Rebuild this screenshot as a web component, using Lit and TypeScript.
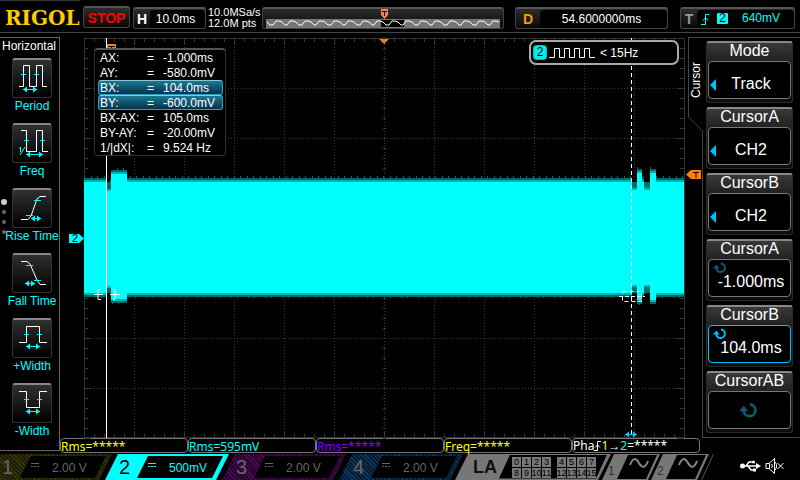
import { LitElement, html, svg, css, nothing } from "lit";
import { customElement, property } from "lit/decorators.js";
import { classMap } from "lit/directives/class-map.js";

const arrow = (x1: number, x2: number, y: number) => svg`
  <path class="c" d="M${x1} ${y}H${x2}"/>
  <path class="cf" d="M${x1} ${y}l4 -3v6zM${x2} ${y}l-4 -3v6z"/>`;

const measureIcons = [
  { label: "Period", art: svg`<path class="w" d="M7 28.5H11.5V7.5H17.5V28.5H24.5V7.5H30.5V28.5H35"/><path class="c" d="M9 16.5h5M22 16.5h5"/>${arrow(11, 25, 31.5)}` },
  { label: "Freq", art: svg`<path class="w" d="M9 7.5H14.5V28.5H24.5V7.5H30.5V28.5H36"/><path class="c" d="M12 17.5h5M28 17.5h5M7 25.5l1.5 -1.5v5M8 32L13 24"/>${arrow(14, 31, 31.5)}` },
  { label: "Rise Time", art: svg`<path class="w" d="M9 31.5H16L19 28L25 11L28 8.5H34"/><path class="c" d="M22 12.5h7M14 27.5h7"/>${arrow(19, 29, 30.5)}` },
  { label: "Fall Time", art: svg`<path class="w" d="M9 8.5H15L18 11L25 27L28 31.5H34"/><path class="c" d="M14 12.5h7M22 27.5h7"/>${arrow(13, 23, 30.5)}` },
  { label: "+Width", art: svg`<path class="w" d="M7 24.5H14.5V8.5H27.5V24.5H35"/><path class="c" d="M12 16.5h5M25 16.5h5"/>${arrow(14, 28, 28.5)}` },
  { label: "-Width", art: svg`<path class="w" d="M7 8.5H14.5V24.5H27.5V8.5H35"/><path class="c" d="M12 16.5h5M25 16.5h5"/>${arrow(14, 28, 28.5)}` },
];

const reset = css`
  *, *::before, *::after { box-sizing: border-box; }
  button { font: inherit; color: inherit; background: none; border: 0; padding: 0; margin: 0; cursor: pointer; }
  svg { display: block; }
`;

@customElement("scope-header")
export class ScopeHeader extends LitElement {
  static styles = [reset, css`
    :host { display: flex; height: 33px; border-bottom: 1px solid #444; padding: 0 5px 0 0; align-items: flex-start; font-size: 12px; }
    .logo { width: 80px; height: 32px; margin: 0 3px 0 0; padding-left: 5px; border-top: 1px solid #333; font: bold 20px/34px "DejaVu Serif", serif; color: #fc0; }
    .chip { height: 22px; margin-top: 7px; border: 1px solid #444; border-top: 2px solid #555; border-radius: 3px; background: linear-gradient(#2c2c2c, #080808); display: flex; align-items: center; color: #fff; }
    .stop { width: 47px; margin-top: 6px; justify-content: center; color: #f00; font: bold 14px/18px "Liberation Sans", sans-serif; }
    .time { width: 73px; margin-left: 3px; }
    .key { width: 16px; text-align: center; font: bold 14px/18px "Liberation Sans", sans-serif; }
    .val { flex: 1; height: 18px; line-height: 19px; padding-right: 4px; background: #000; border-radius: 4px; text-align: center; }
    .rate { width: 52px; margin: 7px 2px 0; font-size: 11px; line-height: 11px; white-space: nowrap; color: #fff; }
    .mem { flex: 1; padding: 0 3px; }
    .mem svg { width: 100%; height: 20px; }
    .delay { width: 153px; margin-left: 11px; }
    .delay .key { width: 24px; color: #f90; }
    .trig { width: 115px; margin-left: 12px; color: #0ff; }
    .trig .key { color: #999; }
    .trig .val { display: flex; align-items: center; padding-left: 4px; }
    .src { width: 11px; height: 11px; margin: 0 14px 0 8px; border-radius: 1px; background: #0ff; color: #000; line-height: 11px; text-align: center; }
  `];
  render() {
    let wave = "M1 13";
    for (let i = 0; i < 8; i++) wave += "l3 3h3l3 -4h3l3 1l3 3h2l3 -4h3l3 1";
    return html`
      <div class="logo">RIGOL</div>
      <button class="chip stop">STOP</button>
      <button class="chip time"><span class="key">H</span><span class="val">10.0ms</span></button>
      <div class="rate">10.0MSa/s<br>12.0M pts</div>
      <div class="chip mem">
        <svg viewBox="0 0 234 20" preserveAspectRatio="none">
          <rect x="0" y="10" width="234" height="9" fill="#777"/>
          <rect x="115" y="11" width="23" height="7" fill="#000"/>
          <path d=${wave} fill="none" stroke="#fff"/>
          <path d="M115 0h7v6l-3.5 4l-3.5 -4z" fill="#ff7f3f"/>
          <path d="M116 2.5h5M118.5 2v5" stroke="#000" fill="none"/>
        </svg>
      </div>
      <button class="chip delay"><span class="key">D</span><span class="val">54.6000000ms</span></button>
      <button class="chip trig"><span class="key">T</span><span class="val">
        <svg width="8" height="12" viewBox="0 0 8 12"><path d="M0 11.5H4.5V1.5H8M2 7.5L4.5 4.5L7 7.5" fill="none" stroke="#0ff"/></svg>
        <span class="src">2</span>640mV</span></button>`;
  }
}

@customElement("measure-menu")
export class MeasureMenu extends LitElement {
  static styles = [reset, css`
    :host { display: flex; flex-direction: column; position: relative; margin: 4px 0 2px; border: solid #666; border-width: 1px 1px 1px 0; font-size: 12px; }
    .title { padding-left: 2px; height: 20px; line-height: 16px; color: #fff; }
    .list { display: grid; gap: 9px; justify-items: center; padding-left: 4px; }
    button { display: grid; justify-items: center; color: #0ff; white-space: nowrap; width: 56px; }
    .box { width: 40px; height: 40px; border: 1px solid #333; border-top: 2px solid #888; border-radius: 3px; background: linear-gradient(#303030, #000); }
    .box svg { margin: -2px 0 0 -1px; }
    .label { height: 16px; line-height: 16px; }
    .w, .c { fill: none; stroke: #fff; }
    .c { stroke: #0ff; }
    .cf { fill: #0ff; }
    .pages { position: absolute; left: 0; top: 160px; }
  `];
  render() {
    return html`
      <div class="title">Horizontal</div>
      <div class="list">${measureIcons.map((m) => html`
        <button><span class="box"><svg width="40" height="40" viewBox="0 0 40 40">${m.art}</svg></span><span class="label">${m.label}</span></button>`)}
      </div>
      <svg class="pages" width="8" height="40" viewBox="0 0 8 40">
        <circle cx="4" cy="4" r="3" fill="#ccc"/>
        <circle cx="4" cy="14" r="2" fill="#666"/><circle cx="4" cy="24" r="2" fill="#666"/><circle cx="4" cy="34" r="2" fill="#666"/>
      </svg>`;
  }
}

const readings: [string, string, boolean][] = [
  ["AX:", "-1.000ms", false],
  ["AY:", "-580.0mV", false],
  ["BX:", "104.0ms", true],
  ["BY:", "-600.0mV", true],
  ["BX-AX:", "105.0ms", false],
  ["BY-AY:", "-20.00mV", false],
  ["1/|dX|:", "9.524 Hz", false],
];

/* Envelope of the trace, as [from, to, top, bottom] spans of the 600 x 400 graticule. */
const spans = [
  [0, 23, 144, 255], [23, 27, 153, 248], [27, 43, 136, 261], [43, 548, 144, 255],
  [548, 553, 152, 247], [553, 558, 135, 262], [558, 560, 144, 255], [560, 566, 152, 247],
  [566, 572, 135, 262], [572, 600, 144, 255],
];

@customElement("scope-plot")
export class ScopePlot extends LitElement {
  static styles = [reset, css`
    :host { display: block; position: relative; z-index: 1; padding: 5px 4px 0 24px; }
    .plot { width: 100%; height: 100%; overflow: visible; }
    .mark { font: 11px "Liberation Sans", sans-serif; }
    .readout { position: absolute; left: 34px; top: 15px; width: 132px; padding: 0 2px 0 3px; background: #000; border: 1px solid #333; border-top: 2px solid #555; border-radius: 4px; font-size: 12px; color: #fff; }
    table { width: 100%; border-collapse: separate; border-spacing: 0; table-layout: fixed; }
    th, td { height: 15px; line-height: 14px; padding: 0; font-weight: normal; text-align: left; white-space: nowrap; }
    th { width: 49px; padding-left: 2px; }
    .eq { width: 16px; }
    .on th, .on td { background: linear-gradient(#1c7a94, #04304a); border: solid #2aa0bc; border-width: 1px 0; border-top-color: #8cc8d8; line-height: 12px; }
    .on th { border-left-width: 1px; padding-left: 1px; border-radius: 3px 0 0 3px; }
    .on td:last-child { border-right-width: 1px; border-radius: 0 3px 3px 0; }
    .freq { position: absolute; right: 9px; top: 7px; width: 150px; height: 25px; display: flex; align-items: center; gap: 2px; padding-left: 2px; background: #000; border: 2px solid #aaa; border-radius: 7px; font-size: 12px; color: #fff; }
    .ch { width: 14px; height: 15px; border-radius: 4px; background: #0ee; color: #000; text-align: center; line-height: 15px; box-shadow: inset 0 0 2px #055; }
    .freq .num { margin-left: 3px; }
  `];
  render() {
    const minor: string[] = [];
    for (let x = 0; x <= 600; x += 10) {
      const n = x % 50 ? 4 : 7;
      minor.push(`M${x}.5 0v${n}M${x}.5 400v-${n}M${x}.5 199v3`);
    }
    for (let y = 0; y <= 400; y += 10) {
      const n = y % 50 ? 4 : 7;
      minor.push(`M0 ${y}.5h${n}M600 ${y}.5h-${n}M299 ${y}.5h3`);
    }
    let major = "";
    for (let x = 50; x < 600; x += 50) major += `M${x}.5 0V400`;
    for (let y = 50; y < 400; y += 50) major += `M0 ${y}.5H600`;
    let noise = "";
    for (let x = 0; x < 600; x++) {
      const s = spans.find((p) => x >= p[0] && x < p[1])!;
      const up = (x * 7919) % 13 < 2 ? 6 : 4;
      const down = (x * 6151) % 17 < 2 ? 5 : 4;
      noise += `M${x}.5 ${Math.min(s[2], 148) - up}V${Math.max(s[3], 251) + down}`;
    }
    return html`
      <svg class="plot" viewBox="0 0 600 400">
        <path d=${major} fill="none" stroke="#3a3a3a" stroke-dasharray="1 2"/>
        <path d=${minor.join("")} fill="none" stroke="#383838"/>
        <rect x="0.5" y="0.5" width="600" height="399" fill="none" stroke="#333"/>
        <path d=${noise} fill="none" stroke="#006c6c"/>
        ${spans.map(([a, b, t, m]) => svg`
          <rect x=${a} y=${t - 2} width=${b - a} height=${m - t + 4} fill="#00b4b4"/>
          <rect x=${a} y=${t} width=${b - a} height=${m - t} fill="#0ff"/>`)}
        <path d="M22.5 0V400" stroke="#fff"/>
        <path d="M547.5 0V396" stroke="#fff" stroke-dasharray="4 3"/>
        <path d="M10 256.5h9M17 251.5h-3v10h3M26 256.5h10M29 251.5h2v10h-2" fill="none" stroke="#fff"/>
        <path d="M535 258.5h26" stroke="#fff" stroke-dasharray="4 2"/>
        <rect x="538.5" y="253.5" width="19" height="10" fill="none" stroke="#fff" stroke-dasharray="4 3"/>
        <path d="M542 396.5H552" stroke="#00c8ff"/><path d="M541 396.5l4 -3v6zM553 396.5l-4 -3v6z" fill="#00c8ff"/>
        <path d="M23 6h9v6h-9z" fill="#ff8000"/><path d="M24 8.5h7M27.5 8v4" stroke="#000"/>
        <path d="M295 1h10l-5 5z" fill="#ff8000"/>
        <path d="M602 136.500l5 -4.500h10v9h-10z" fill="#ff8000"/>
        <path d="M609 134.500h6M612 134v6" stroke="#000" fill="none"/>
        <path d="M-15 196h10l5 4.500l-5 4.500h-10z" fill="#0ff"/>
        <text class="mark" x="-12" y="204">2</text>
      </svg>
      <div class="readout"><table>
        ${readings.map(([k, v, on]) => html`<tr class=${classMap({ on })}><th scope="row">${k}</th><td class="eq">=</td><td>${v}</td></tr>`)}
      </table></div>
      <div class="freq"><span class="ch">2</span>
        <svg width="46" height="12" viewBox="0 0 46 12"><path d="M0 10.500H5.500V1.500H10.500V10.500H15.500V1.500H20.500V10.500H25.500V1.500H30.500V10.500H35.500V1.500H40.500V10.500H46" fill="none" stroke="#fff"/></svg>
        <span class="num">&lt; 15Hz</span></div>`;
  }
}

interface Key { title: string; value: string; kind: "menu" | "knob"; active?: boolean; disabled?: boolean; }
const keys: Key[] = [
  { title: "Mode", value: "Track", kind: "menu" },
  { title: "CursorA", value: "CH2", kind: "menu" },
  { title: "CursorB", value: "CH2", kind: "menu" },
  { title: "CursorA", value: "-1.000ms", kind: "knob" },
  { title: "CursorB", value: "104.0ms", kind: "knob", active: true },
  { title: "CursorAB", value: "", kind: "knob", disabled: true },
];

@customElement("soft-menu")
export class SoftMenu extends LitElement {
  @property({ attribute: false }) keys: Key[] = [];
  static styles = [reset, css`
    :host { display: flex; margin-top: 4px; }
    .tab { width: 15px; display: flex; flex-direction: column; }
    .name { height: 80px; border: solid #444; border-width: 0 1px 1px 0; writing-mode: vertical-rl; transform: rotate(180deg); font-size: 12px; line-height: 14px; color: #fff; padding-top: 19px; }
    .edge { flex: 1; border-right: 1px solid #444; }
    .keys { flex: 1; border: solid #444; border-width: 1px 0; padding: 3px 7px 0 3px; display: grid; gap: 4px; align-content: start; }
    button { display: flex; flex-direction: column; align-items: stretch; justify-content: flex-start; height: 62px; border: 1px solid #2a2a2a; border-top: 2px solid #888; border-radius: 3px; background: linear-gradient(#383838, #222 18px, #0c0c0c); color: #fff; font-size: 16px; padding: 0 1px; }
    .head { height: 18px; line-height: 15px; text-align: center; }
    .box { display: flex; position: relative; align-items: center; justify-content: center; height: 38px; padding: 8px 0 0 3px; background: #000; border: 1px solid #777; border-radius: 4px; }
    .active .box { border-color: #00c0ff; }
    .tri { position: absolute; left: 1px; top: 17px; }
    .knob { position: absolute; left: 4px; top: 2px; }
    .off .box { padding: 0 4px 0 0; }
    .off .knob { position: static; }
    .off .knob svg { width: 18px; height: 17px; }
  `];
  render() {
    return html`
      <div class="tab">
        <div class="name">Cursor</div>
        <svg width="15" height="14" viewBox="0 0 15 14"><path d="M0.5 0L14.5 14" stroke="#444"/></svg>
        <div class="edge"></div>
      </div>
      <div class="keys">${this.keys.map((k) => html`
        <button class=${classMap({ active: !!k.active, off: !!k.disabled })} ?disabled=${k.disabled}>
          <span class="head">${k.title}</span>
          <span class="box">
            ${k.kind === "menu"
              ? html`<svg class="tri" width="6" height="12" viewBox="0 0 6 12"><path d="M6 0v12L0 6z" fill="#00c0ff"/></svg>`
              : html`<span class="knob"><svg width="13" height="12" viewBox="0 0 13 12">
                  <path d="M8 1.500A4.300 4.300 0 1 1 3.300 6" fill="none" stroke=${k.active ? "#00c0ff" : "#0c5c70"} stroke-width="2"/>
                  <path d="M0 6.500L3.500 2.500L6.500 6.500z" fill=${k.active ? "#00c0ff" : "#0c5c70"}/></svg></span>`}
            ${k.value || nothing}
          </span>
        </button>`)}
      </div>`;
  }
}

@customElement("channel-bar")
export class ChannelBar extends LitElement {
  static styles = [reset, css`
    :host { display: flex; height: 27px; padding-top: 1px; overflow: hidden; font-size: 12px; color: #666; }
    .ch { flex: none; width: 124px; height: 26px; margin-left: -7px; padding: 2px 6px 2px 14px; display: flex; align-items: center; clip-path: polygon(13px 0, 100% 0, calc(100% - 13px) 100%, 0 100%); }
    .ch:first-child { margin-left: -12px; }
    .one { background: repeating-linear-gradient(45deg, #3a3a08 0 1px, #1e1e04 1px 3px); }
    .two { background: #0ff; color: #0ff; }
    .three { background: repeating-linear-gradient(45deg, #4c0a58 0 1px, #26042c 1px 3px); }
    .four { background: repeating-linear-gradient(45deg, #0a3c66 0 1px, #041c30 1px 3px); }
    .no { width: 18px; text-align: left; font-size: 20px; line-height: 22px; }
    .two .no { color: #000; }
    .in { flex: 1; height: 22px; display: flex; align-items: center; gap: 13px; padding: 2px 0 0 11px; background: #000; clip-path: polygon(11px 0, 100% 0, calc(100% - 11px) 100%, 0 100%); }
    .in svg { margin-top: -6px; }
    .la { flex: none; width: 156px; height: 26px; margin-left: -8px; padding: 1px 4px 2px 16px; display: flex; align-items: center; background: #777; clip-path: polygon(13px 0, 100% 0, calc(100% - 13px) 100%, 0 100%); color: #111; }
    .name { width: 28px; font: bold 18px/22px "Liberation Sans", sans-serif; }
    .bits { flex: 1; height: 24px; padding: 2px 0 0 13px; background: #000; clip-path: polygon(11px 0, 100% 0, calc(100% - 11px) 100%, 0 100%); display: grid; grid-template-columns: repeat(4, 9px) 4px repeat(4, 9px); gap: 1px; grid-auto-rows: 10px; }
    .bit { background: #777; color: #000; font-size: 9px; line-height: 11px; overflow: hidden; display: flex; justify-content: center; }
    .gen { flex: none; width: 58px; height: 26px; margin-left: -9px; padding: 1px 3px 1px 6px; display: flex; background: #777; clip-path: polygon(12px 0, 100% 0, calc(100% - 12px) 100%, 0 100%); color: #333; }
    .gen .no { width: 9px; font-size: 12px; line-height: 33px; }
    .gen .in { height: 24px; padding: 0 0 0 12px; }
    .gen .in svg { margin-top: -8px; }
    .end { flex: none; margin-left: -8px; }
    .tray { flex: 1; display: flex; justify-content: flex-end; align-items: center; gap: 4px; padding: 0 14px 2px 0; }
  `];
  private channel(cls: string, no: string, scale: string) {
    return html`<button class="ch ${cls}"><span class="no">${no}</span><span class="in">
      <svg width="8" height="5" viewBox="0 0 8 5"><path d="M0 .5h8M0 3.500h2M3 3.500h2M6 3.500h2" stroke="currentColor"/></svg>${scale}</span></button>`;
  }
  private generator(no: string) {
    return html`<button class="gen"><span class="no">${no}</span><span class="in">
      <svg width="20" height="11" viewBox="0 0 20 11"><path d="M1 7C4 -1 7 0 10 5S16 11 19 3" fill="none" stroke="#888" stroke-width="2"/></svg></span></button>`;
  }
  render() {
    const row = (from: number) => [0, 1, 2, 3, -1, 4, 5, 6, 7].map((i) =>
      i < 0 ? html`<span></span>` : html`<span class="bit">${from + i}</span>`);
    return html`
      ${this.channel("one", "1", "2.00 V")}
      ${this.channel("two", "2", "500mV")}
      ${this.channel("three", "3", "2.00 V")}
      ${this.channel("four", "4", "2.00 V")}
      <button class="la"><span class="name">LA</span><span class="bits">${row(0)}${row(8)}</span></button>
      ${this.generator("1")}${this.generator("2")}
      <svg class="end" width="13" height="26" viewBox="0 0 13 26"><path d="M12.500 0L0.500 26" stroke="#555"/></svg>
      <div class="tray">
        <svg width="21" height="12" viewBox="0 0 21 12">
          <path d="M3 6H17M6 6L9 2H13M8 6L11 10H14" fill="none" stroke="#fff" stroke-width="1.500"/>
          <circle cx="2.500" cy="6" r="2.500" fill="#fff"/><path d="M16 3l5 3l-5 3z" fill="#fff"/>
          <circle cx="13.500" cy="2" r="1.500" fill="#fff"/><path d="M13 8.500h3v3h-3z" fill="#fff"/>
        </svg>
        <svg width="21" height="16" viewBox="0 0 21 16">
          <path d="M1 5.500H4L9.500 0.500V15.500L4 10.500H1zM12.500 5l6 6M18.500 5l-6 6" fill="none" stroke="#fff"/>
          <path d="M4.500 5.500v5M6.500 6c1 1 1 3 0 4M10 4c2 2 2 6 0 8" fill="none" stroke="#fff"/>
        </svg>
      </div>`;
  }
}

@customElement("app-root")
export class AppRoot extends LitElement {
  static styles = [reset, css`
    :host { display: grid; grid-template-rows: auto 1fr auto; min-height: 100vh; background: #000; color: #fff; font-family: "Liberation Sans", Arial, sans-serif; }
    .body { display: grid; grid-template-columns: 60px 1fr 112px; grid-template-rows: 1fr 15px; }
    measure-menu { grid-row: 1 / 3; }
    .results { grid-column: 2 / 4; margin-right: 100px; display: grid; grid-template-columns: repeat(5, 1fr); font: 12px/15px "Noto Sans", sans-serif; }
    .result { border: 1px solid #777; border-radius: 4px; line-height: 15px; height: 15px; white-space: nowrap; }
    .y { color: #ff0; }
    .c { color: #0ff; }
    .p { color: #80f; }
    .phase { display: flex; align-items: center; }
  `];
  render() {
    return html`
      <scope-header></scope-header>
      <div class="body">
        <measure-menu></measure-menu>
        <scope-plot></scope-plot>
        <soft-menu .keys=${keys}></soft-menu>
        <div class="results">
          <div class="result y">Rms=*****</div>
          <div class="result c">Rms=595mV</div>
          <div class="result p">Rms=*****</div>
          <div class="result y">Freq=*****</div>
          <div class="result phase">Pha<svg width="7" height="10" viewBox="0 0 7 10"><path d="M0 9.500H3.500V.5H7M1 6.500L3.500 4L6 6.500" fill="none" stroke="#fff"/></svg><span class="y">1</span>→<span class="c">2</span>=*****</div>
        </div>
      </div>
      <channel-bar></channel-bar>`;
  }
}
